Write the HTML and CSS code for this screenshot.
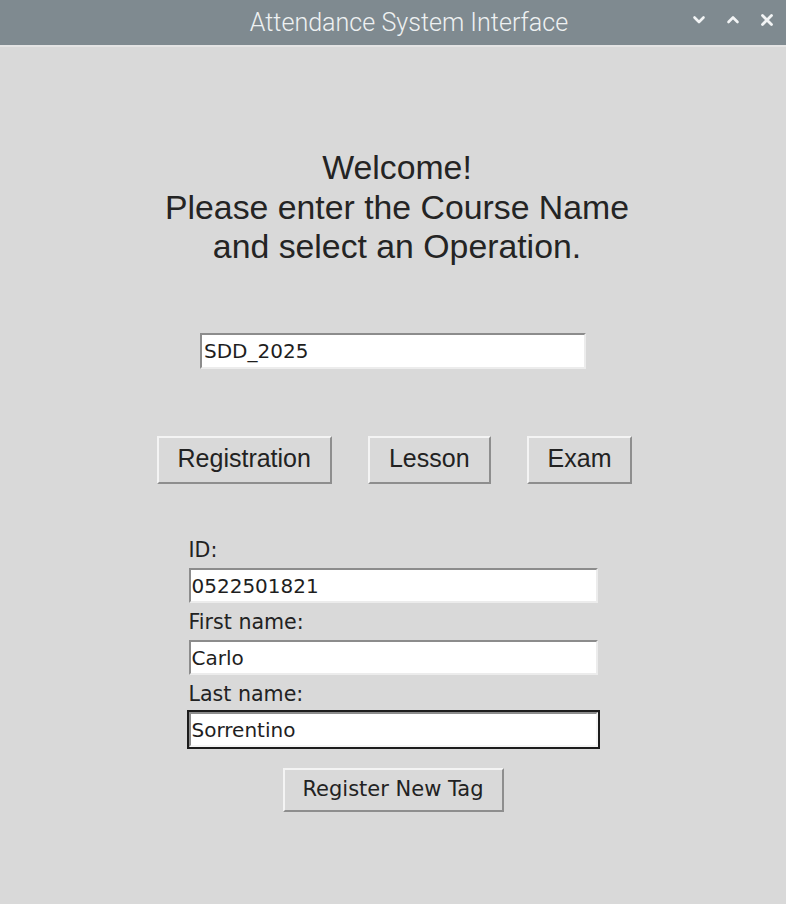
FILE: index.html
```html
<!DOCTYPE html>
<html>
<head>
<meta charset="utf-8">
<title>Attendance System Interface</title>
<link rel="stylesheet" href="styles.css">
</head>
<body>
<div class="window">
  <header class="titlebar">
    <div class="title">Attendance System Interface</div>
    <div class="controls">
      <svg class="ctl" width="14" height="14" viewBox="0 0 14 14"><path d="M2.5 4.5 L7 9 L11.5 4.5" fill="none" stroke="#f2f4f5" stroke-width="2.6" stroke-linecap="round" stroke-linejoin="round"/></svg>
      <svg class="ctl" width="14" height="14" viewBox="0 0 14 14"><path d="M2.5 9 L7 4.5 L11.5 9" fill="none" stroke="#f2f4f5" stroke-width="2.6" stroke-linecap="round" stroke-linejoin="round"/></svg>
      <svg class="ctl" width="14" height="14" viewBox="0 0 14 14"><path d="M2.5 2.5 L11.5 11.5 M11.5 2.5 L2.5 11.5" fill="none" stroke="#f2f4f5" stroke-width="2.8" stroke-linecap="round"/></svg>
    </div>
  </header>
  <main class="content">
    <h1 class="heading">Welcome!<br>Please enter the Course Name<br>and select an Operation.</h1>
    <input class="entry course" type="text" value="SDD_2025">
    <div class="ops">
      <button class="btn op">Registration</button>
      <button class="btn op">Lesson</button>
      <button class="btn op">Exam</button>
    </div>
    <div class="form">
      <label class="lbl">ID:</label>
      <div class="field"><input class="entry" type="text" value="0522501821"></div>
      <label class="lbl">First name:</label>
      <div class="field"><input class="entry" type="text" value="Carlo"></div>
      <label class="lbl">Last name:</label>
      <div class="field focused"><input class="entry" type="text" value="Sorrentino"></div>
    </div>
    <button class="btn reg">Register New Tag</button>
  </main>
</div>
</body>
</html>
```
FILE: styles.css
```css
* { box-sizing: border-box; }
html, body {
  margin: 0;
  padding: 0;
  background: #d9d9d9;
  width: 786px;
  height: 904px;
  overflow: hidden;
}
.window {
  display: flex;
  flex-direction: column;
  height: 904px;
}
.titlebar {
  height: 45px;
  background: #7f8a90;
  display: flex;
  align-items: center;
  position: relative;
  border-bottom: 2px solid #e4e4e4;
  box-sizing: content-box;
}
.title {
  flex: 1;
  text-align: center;
  padding-left: 32px;
  font-family: Roboto, "Liberation Sans", sans-serif;
  font-weight: 300;
  font-size: 25.1px;
  color: #eef1f2;
}
.controls {
  position: absolute;
  right: 12px;
  top: 13px;
  display: flex;
  gap: 20px;
}
.ctl { display: block; }
.content {
  display: flex;
  flex-direction: column;
  align-items: center;
  font-family: "DejaVu Sans", sans-serif;
  color: #222;
}
.heading {
  margin: 101px 0 0 0;
  padding-left: 8px;
  font-family: "Liberation Sans", Arial, sans-serif;
  font-weight: normal;
  font-size: 33.8px;
  line-height: 39.5px;
  text-align: center;
  color: #242424;
}
.entry {
  font-family: "DejaVu Sans", sans-serif;
  font-size: 20px;
  color: #1e1e1e;
  background: #fff;
  border-style: solid;
  border-width: 2px;
  border-color: #8c8c8c #ececec #ececec #8c8c8c;
  padding: 0 1px;
  margin: 0;
  outline: none;
  display: block;
}
.course {
  margin-top: 66px;
  width: 386px;
  height: 36px;
  padding-left: 2px;
}
.ops {
  margin-top: 67px;
  padding-left: 3px;
  display: flex;
  gap: 36px;
}
.btn {
  font-family: "Liberation Sans", Arial, sans-serif;
  background: #d9d9d9;
  color: #222;
  border-style: solid;
  border-width: 2px;
  border-color: #f4f4f4 #8e8e8e #8e8e8e #f4f4f4;
  margin: 0;
}
.op {
  height: 48px;
  font-size: 25px;
  padding: 0 19px 2px 19px;
}
.form {
  margin-top: 54px;
  width: 413px;
  display: flex;
  flex-direction: column;
}
.lbl {
  font-size: 20.6px;
  line-height: 24px;
  height: 24px;
  margin: 0 0 4.5px 2px;
  color: #222;
}
.field {
  height: 39px;
  border: 2px solid transparent;
  margin-bottom: 4.5px;
}
.field .entry {
  width: 100%;
  height: 100%;
}
.field.focused {
  border-color: #1c1c1c;
}
.field.focused .entry {
  border-color: #8c8c8c #f4f4f4 #f4f4f4 #8c8c8c;
}
.reg {
  margin-top: 14px;
  width: 221px;
  height: 44px;
  font-family: "DejaVu Sans", sans-serif;
  font-size: 21px;
  padding: 0 0 2px 0;
}
```
